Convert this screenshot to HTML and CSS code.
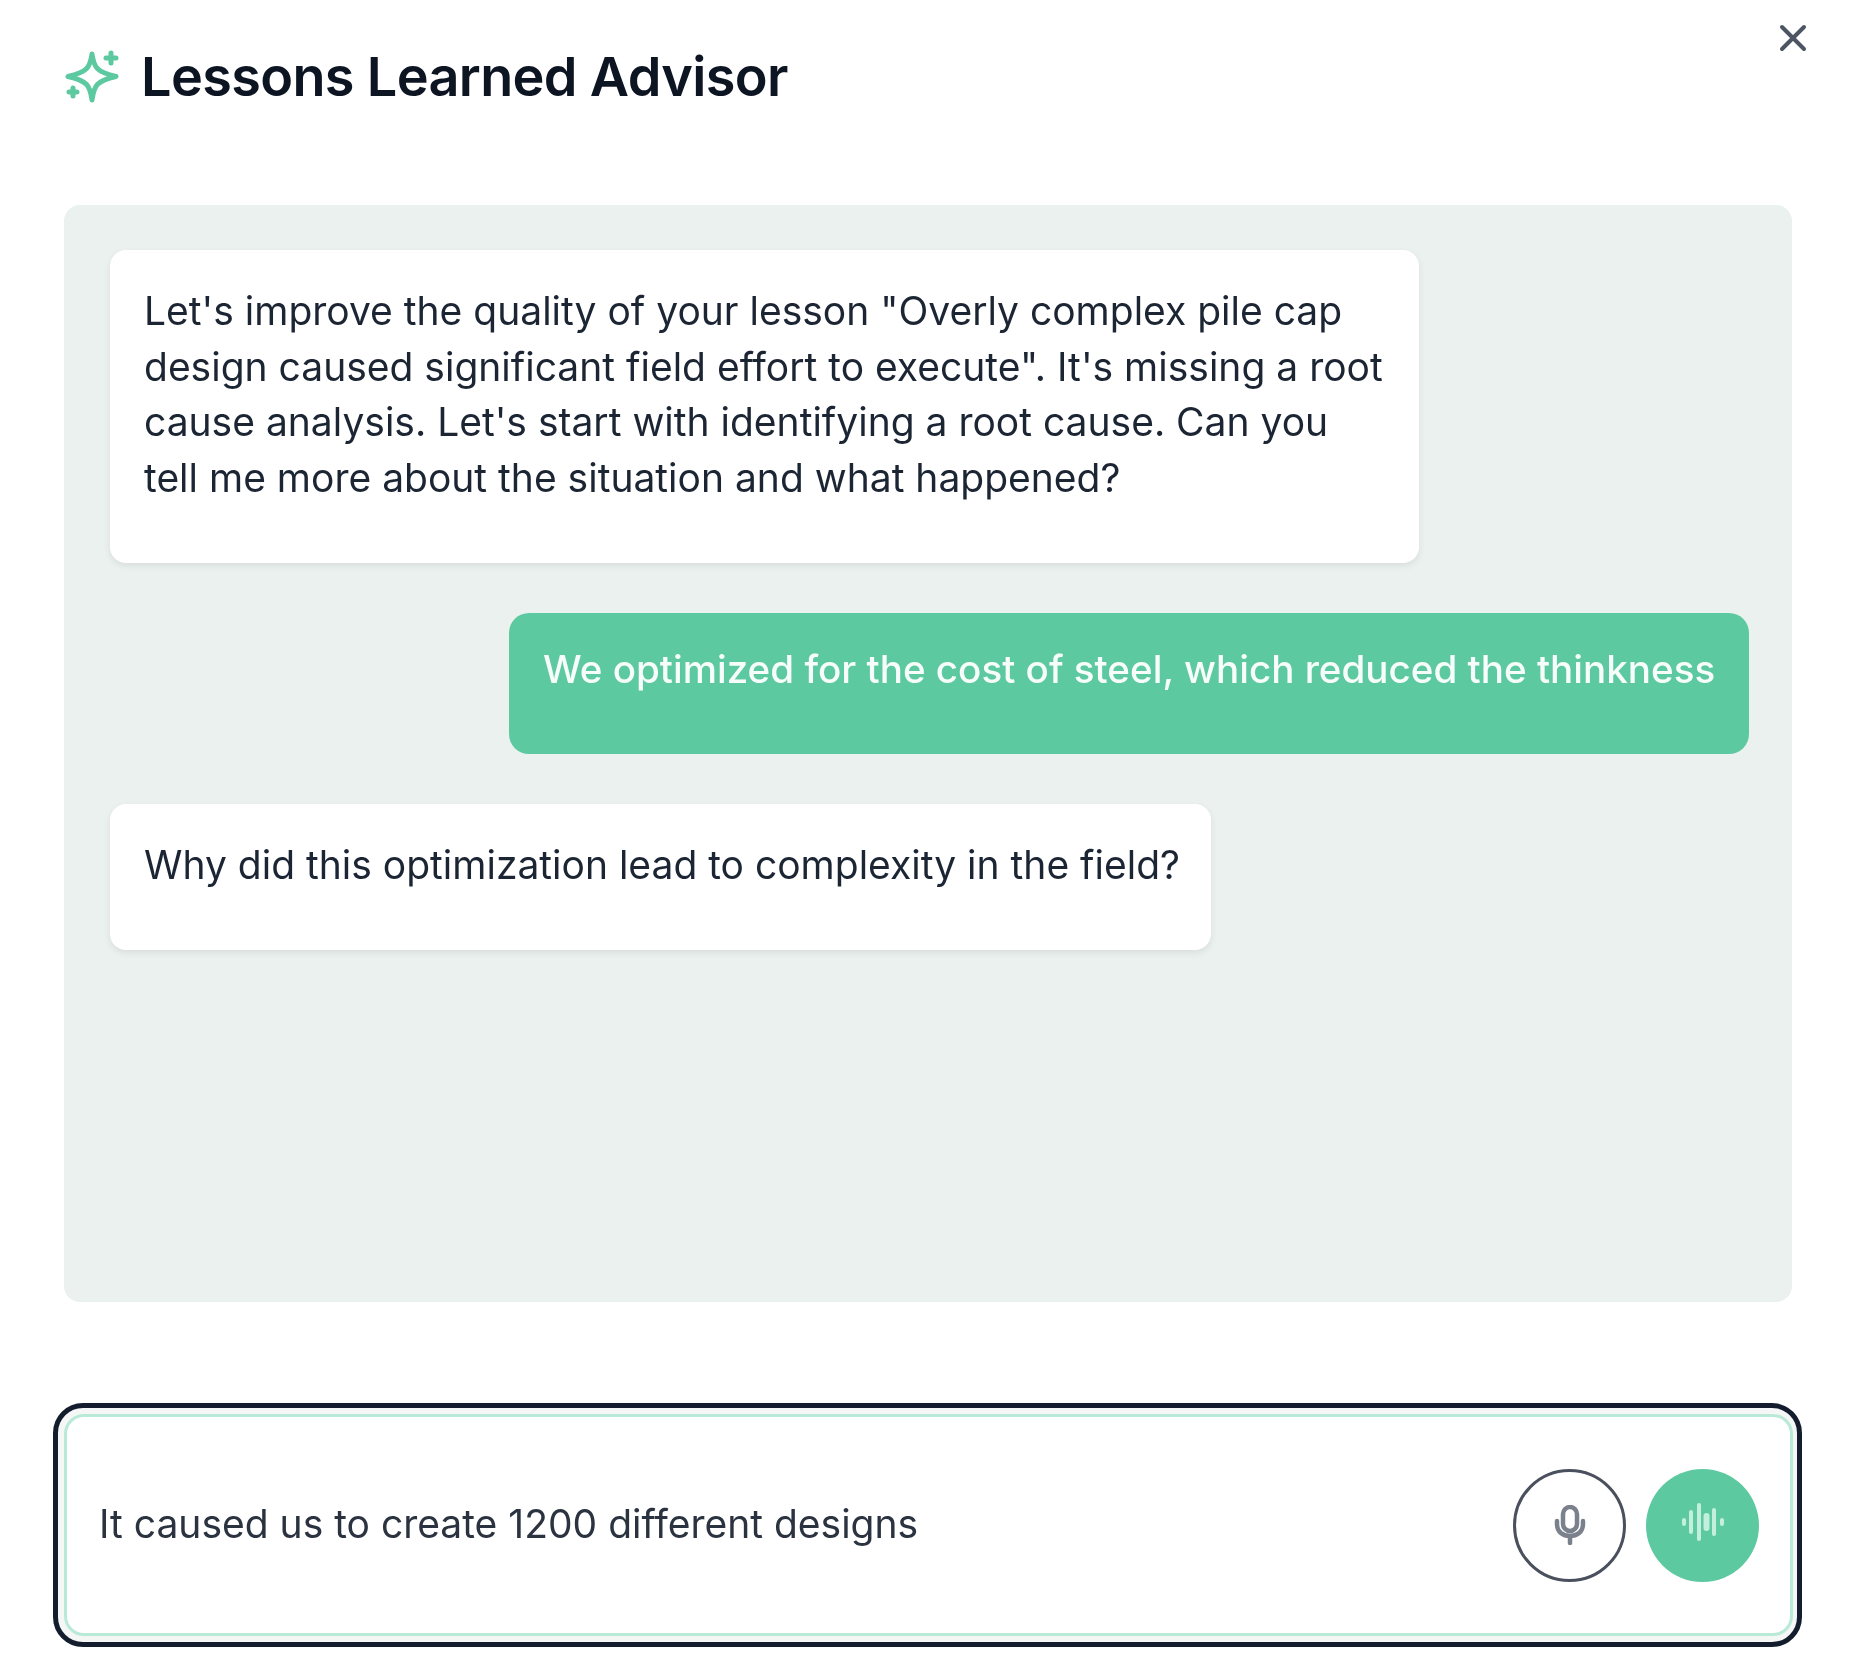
FILE: index.html
```html
<!DOCTYPE html>
<html lang="en">
<head>
    <meta charset="UTF-8">
    <title>Lessons Learned Advisor</title>
    <link rel="stylesheet" href="styles.css">
</head>
<body>
    <div class="dialog">
        <button class="close-button" aria-label="Close">
            <svg width="28" height="28" viewBox="0 0 28 28" fill="none" stroke="#4b5563" stroke-width="4" stroke-linecap="round">
                <path d="M3 3 L25 25 M25 3 L3 25"/>
            </svg>
        </button>

        <header class="header">
            <svg class="sparkle" width="54" height="54" viewBox="0 0 54 54" fill="none" stroke="#5cc9a0" stroke-width="5" stroke-linejoin="round">
                <path d="M27 5 C29 19 32 23 51 27.500 C32 32 29 36 27 51 C25 36 22 32 3 27.500 C22 23 25 19 27 5 Z"/>
                <path d="M46 4 V14 M41 9 H51" stroke-linecap="round"/>
                <path d="M8 39 V47 M4 43 H12" stroke-linecap="round"/>
            </svg>
            <h1>Lessons Learned Advisor</h1>
        </header>

        <div class="chat">
            <div class="bubble bubble-bot bubble-long">Let's improve the quality of your lesson "Overly complex pile cap design caused significant field effort to execute". It's missing a root cause analysis. Let's start with identifying a root cause. Can you tell me more about the situation and what happened?</div>
            <div class="bubble bubble-user">We optimized for the cost of steel, which reduced the thinkness</div>
            <div class="bubble bubble-bot">Why did this optimization lead to complexity in the field?</div>
        </div>

        <div class="composer">
            <div class="composer-inner">
                <span class="composer-text">It caused us to create 1200 different designs</span>
                <button class="round-button mic-button" aria-label="Dictate">
                    <svg width="32" height="40" viewBox="0 0 32 40" fill="none" stroke="#7b818c" stroke-width="4.500" stroke-linecap="round">
                        <rect x="9" y="2" width="14" height="24" rx="7"/>
                        <path d="M3 16 V19 C3 27 9 31 16 31 C23 31 29 27 29 19 V16"/>
                        <path d="M16 31 V38"/>
                    </svg>
                </button>
                <button class="round-button voice-button" aria-label="Voice mode">
                    <svg class="wave" width="44" height="38" viewBox="0 0 44 38" fill="none" stroke="#c4eedd" stroke-width="4" stroke-linecap="round">
                        <path d="M3 17 V21 M10 9 V29 M18 2 V36 M33 7 V31 M41 17 V21"/>
                        <path d="M25.500 13 V25" stroke-width="6"/>
                    </svg>
                </button>
            </div>
        </div>
    </div>
</body>
</html>
```

FILE: styles.css
```css
html, body {
    margin: 0;
    padding: 0;
    background: #fff;
}

body {
    font-family: Inter, "Liberation Sans", sans-serif;
    color: #1c2533;
}

.dialog {
    position: relative;
    width: 1860px;
    height: 1680px;
    box-sizing: border-box;
    padding: 40px 58px 0 53px;
    display: flex;
    flex-direction: column;
    filter: blur(0.7px);
}

.close-button {
    position: absolute;
    top: 24px;
    right: 53px;
    padding: 0;
    border: 0;
    background: none;
    line-height: 0;
}

.header {
    display: flex;
    align-items: center;
    gap: 22px;
    height: 72px;
    margin-left: 12px;
}

.header h1 {
    margin: 0;
    font-size: 54px;
    font-weight: 600;
    letter-spacing: -0.65px;
    color: #0d1422;
}

.chat {
    display: flex;
    flex-direction: column;
    align-items: flex-start;
    gap: 50px;
    width: 1728px;
    height: 1097px;
    margin: 93px 0 0 11px;
    padding: 45px 43px 0 46px;
    box-sizing: border-box;
    background: #ebf1ef;
    border-radius: 16px;
}

.bubble {
    box-sizing: border-box;
    padding: 33px 31px 58px 34px;
    font-size: 39px;
    line-height: 55.700px;
    border-radius: 16px;
    background: #fff;
    box-shadow: 0 3px 7px rgba(0, 0, 0, 0.08);
}

.bubble-long {
    width: 1309px;
    padding-bottom: 57px;
}

.bubble-user {
    align-self: flex-end;
    width: 1240px;
    padding-top: 29px;
    padding-bottom: 56px;
    white-space: nowrap;
    font-size: 38.600px;
    font-weight: 500;
    background: #5cc9a0;
    color: #f7fdfa;
    box-shadow: none;
    border-radius: 20px;
}

.composer {
    margin-top: 101px;
    width: 1749px;
    height: 244px;
    box-sizing: border-box;
    border: 5px solid #141d2e;
    border-radius: 30px;
    padding: 6px 4px 6px 6px;
    background: #f4f7f6;
}

.composer-inner {
    display: flex;
    align-items: center;
    gap: 20px;
    height: 100%;
    box-sizing: border-box;
    padding: 0 31px 0 32px;
    background: #fff;
    border: 3px solid #b9e9d7;
    border-radius: 20px;
}

.composer-text {
    flex: 1;
    margin-bottom: 4px;
    font-size: 39px;
    color: #2b3340;
}

.round-button {
    width: 113px;
    height: 113px;
    padding: 0;
    border-radius: 50%;
    display: flex;
    align-items: center;
    justify-content: center;
}

.mic-button {
    background: #fff;
    border: 3px solid #4a505d;
}

.voice-button {
    background: #5cc9a0;
    border: 0;
}

.wave {
    margin-bottom: 6px;
}
```
